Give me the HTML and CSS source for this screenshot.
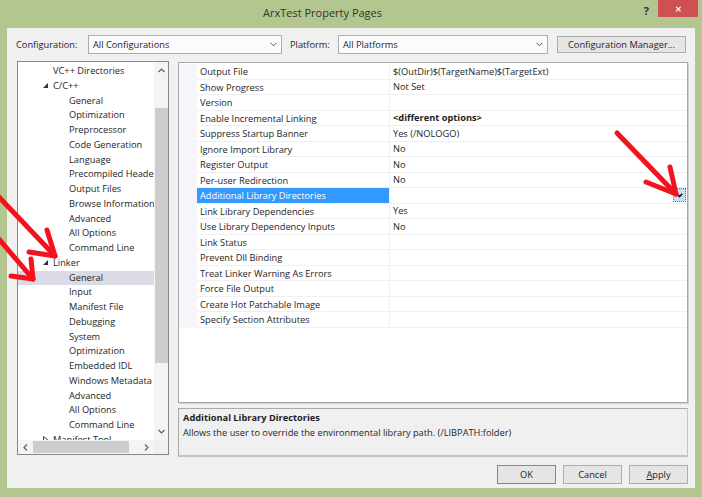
FILE: index.html
```html
<!DOCTYPE html>
<html lang="en">
  <head>
    <meta charset="UTF-8" />
    <title>ArxTest Property Pages</title>
    <link rel="stylesheet" href="styles.css">
  </head>
  <body>
    <div class="window">
      <div class="titlebar">
        <span class="title">ArxTest Property Pages</span>
        <span class="help">?</span>
        <span class="close">&#x2715;</span>
      </div>

      <div class="dialog">
        <div class="toolbar">
          <span class="label label-config">Configuration:</span>
          <div class="combo combo-config">
            <span>All Configurations</span>
            <svg class="chev" width="7" height="5" viewBox="0 0 7 5"><polyline points="0.5,0.8 3.5,3.8 6.5,0.8" fill="none" stroke="#555" stroke-width="1"/></svg>
          </div>
          <span class="label label-platform">Platform:</span>
          <div class="combo combo-platform">
            <span>All Platforms</span>
            <svg class="chev" width="7" height="5" viewBox="0 0 7 5"><polyline points="0.5,0.8 3.5,3.8 6.5,0.8" fill="none" stroke="#555" stroke-width="1"/></svg>
          </div>
          <button class="btn btn-manager">Configuration Manager...</button>
        </div>

        <div class="main">
          <!-- Left navigation tree -->
          <div class="tree">
            <div class="tree-list">
              <div class="node l1">VC++ Directories</div>
              <div class="node l1"><span class="exp open"></span>C/C++</div>
              <div class="node l2">General</div>
              <div class="node l2">Optimization</div>
              <div class="node l2">Preprocessor</div>
              <div class="node l2">Code Generation</div>
              <div class="node l2">Language</div>
              <div class="node l2">Precompiled Headers</div>
              <div class="node l2">Output Files</div>
              <div class="node l2">Browse Information</div>
              <div class="node l2">Advanced</div>
              <div class="node l2">All Options</div>
              <div class="node l2">Command Line</div>
              <div class="node l1"><span class="exp open"></span>Linker</div>
              <div class="node l2 selected">General</div>
              <div class="node l2">Input</div>
              <div class="node l2">Manifest File</div>
              <div class="node l2">Debugging</div>
              <div class="node l2">System</div>
              <div class="node l2">Optimization</div>
              <div class="node l2">Embedded IDL</div>
              <div class="node l2">Windows Metadata</div>
              <div class="node l2">Advanced</div>
              <div class="node l2">All Options</div>
              <div class="node l2">Command Line</div>
              <div class="node l1"><span class="exp closed"><svg width="5" height="7" viewBox="0 0 5 7"><polygon points="0.5,0.5 4.5,3.5 0.5,6.5" fill="none" stroke="#444" stroke-width="1"/></svg></span>Manifest Tool</div>
            </div>
            <div class="vscroll">
              <div class="sb-arrow"><svg width="7" height="5" viewBox="0 0 7 5"><polyline points="0.5,4 3.5,1 6.5,4" fill="none" stroke="#606060" stroke-width="1.2"/></svg></div>
              <div class="vtrack"><div class="vthumb"></div></div>
              <div class="sb-arrow"><svg width="7" height="5" viewBox="0 0 7 5"><polyline points="0.5,1 3.5,4 6.5,1" fill="none" stroke="#606060" stroke-width="1.2"/></svg></div>
            </div>
            <div class="hscroll">
              <div class="sb-arrow h"><svg width="5" height="7" viewBox="0 0 5 7"><polyline points="4,0.5 1,3.5 4,6.5" fill="none" stroke="#606060" stroke-width="1.2"/></svg></div>
              <div class="htrack"><div class="hthumb"></div></div>
              <div class="sb-arrow h"><svg width="5" height="7" viewBox="0 0 5 7"><polyline points="1,0.5 4,3.5 1,6.5" fill="none" stroke="#606060" stroke-width="1.2"/></svg></div>
            </div>
            <div class="corner"></div>
          </div>

          <div class="side">
            <!-- Property grid -->
            <div class="grid">
              <div class="prow"><div class="gutter"></div><div class="pname">Output File</div><div class="pval">$(OutDir)$(TargetName)$(TargetExt)</div></div>
              <div class="prow"><div class="gutter"></div><div class="pname">Show Progress</div><div class="pval">Not Set</div></div>
              <div class="prow"><div class="gutter"></div><div class="pname">Version</div><div class="pval"></div></div>
              <div class="prow"><div class="gutter"></div><div class="pname">Enable Incremental Linking</div><div class="pval bold">&lt;different options&gt;</div></div>
              <div class="prow"><div class="gutter"></div><div class="pname">Suppress Startup Banner</div><div class="pval">Yes (/NOLOGO)</div></div>
              <div class="prow"><div class="gutter"></div><div class="pname">Ignore Import Library</div><div class="pval">No</div></div>
              <div class="prow"><div class="gutter"></div><div class="pname">Register Output</div><div class="pval">No</div></div>
              <div class="prow"><div class="gutter"></div><div class="pname">Per-user Redirection</div><div class="pval">No</div></div>
              <div class="prow selected"><div class="gutter"></div><div class="pname">Additional Library Directories</div>
                <div class="pval">
                  <span class="dropbtn"><svg width="7" height="5" viewBox="0 0 7 5"><polyline points="0.8,0.8 3.5,3.6 6.2,0.8" fill="none" stroke="#111" stroke-width="1.5"/></svg></span>
                </div>
              </div>
              <div class="prow"><div class="gutter"></div><div class="pname">Link Library Dependencies</div><div class="pval">Yes</div></div>
              <div class="prow"><div class="gutter"></div><div class="pname">Use Library Dependency Inputs</div><div class="pval">No</div></div>
              <div class="prow"><div class="gutter"></div><div class="pname">Link Status</div><div class="pval"></div></div>
              <div class="prow"><div class="gutter"></div><div class="pname">Prevent Dll Binding</div><div class="pval"></div></div>
              <div class="prow"><div class="gutter"></div><div class="pname">Treat Linker Warning As Errors</div><div class="pval"></div></div>
              <div class="prow"><div class="gutter"></div><div class="pname">Force File Output</div><div class="pval"></div></div>
              <div class="prow"><div class="gutter"></div><div class="pname">Create Hot Patchable Image</div><div class="pval"></div></div>
              <div class="prow"><div class="gutter"></div><div class="pname">Specify Section Attributes</div><div class="pval"></div></div>
            </div>

            <!-- Description of the selected property -->
            <div class="desc">
              <div class="desc-title">Additional Library Directories</div>
              <div class="desc-text">Allows the user to override the environmental library path. (/LIBPATH:folder)</div>
            </div>
          </div>
        </div>

        <div class="buttons">
          <button class="btn btn-ok">OK</button>
          <button class="btn">Cancel</button>
          <button class="btn"><u>A</u>pply</button>
        </div>
      </div>

      <!-- red annotation arrows drawn over the screenshot -->
      <svg class="marks" width="702" height="497" viewBox="0 0 702 497">
        <g fill="none" stroke="#f5121c" stroke-width="5" stroke-linecap="round" stroke-linejoin="round">
          <path d="M-2,196 L55,256" />
          <path d="M47,230 L55,256 L29,252" />
          <path d="M-2,238 L33,279" />
          <path d="M31,259 L33,279 L11,276" />
          <path d="M617,133 L676,194" />
          <path d="M670,167 L676,194 L646,182" />
        </g>
      </svg>
    </div>
  </body>
</html>
```

FILE: styles.css
```css
/* Global */
* {
  box-sizing: border-box;
}

body {
  margin: 0;
  font-family: "Open Sans", "Noto Sans", sans-serif;
  font-size: 9.25px;
  color: #1e1e1e;
  background: #fff;
}

/* Window frame */
.window {
  position: relative;
  width: 702px;
  height: 497px;
  background: #b3c68f;
  padding: 0 7px 9px 7px;
  display: flex;
  flex-direction: column;
}

.titlebar {
  height: 28px;
  display: flex;
  align-items: flex-start;
}

.title {
  font-size: 11px;
  color: #333;
  margin: 5px 0 0 256px;
}

.help {
  margin: 3px 0 0 auto;
  font-size: 11px;
  font-weight: bold;
  color: #333;
}

.close {
  width: 40px;
  height: 17px;
  margin: 0 -3px 0 9px;
  background: #cf5050;
  color: #fff;
  font-size: 8px;
  font-weight: bold;
  display: flex;
  align-items: center;
  justify-content: center;
}

/* Dialog body */
.dialog {
  flex: 1;
  background: #f0f0f0;
  padding: 7px 7px 4px 9px;
  display: flex;
  flex-direction: column;
}

.toolbar {
  display: flex;
  align-items: center;
  height: 19px;
}

.label-config {
  width: 72px;
}

.label-platform {
  width: 48px;
  margin-left: 8px;
}

.combo {
  height: 19px;
  border: 1px solid #abadb3;
  background: #fbfbfb;
  display: flex;
  align-items: center;
  justify-content: space-between;
  padding: 0 4px 0 4px;
}

.combo-config {
  width: 194px;
}

.combo-platform {
  width: 210px;
}

.btn {
  font-family: inherit;
  font-size: 9.25px;
  color: #1e1e1e;
  background: #e5e5e5;
  border: 1px solid #adadad;
  padding: 0;
  width: 59px;
  height: 19px;
}

.btn-manager {
  width: 129px;
  height: 17px;
  margin-left: 9px;
}

.btn-ok {
  border-color: #3399ff;
}

.main {
  display: flex;
  margin-top: 7px;
  height: 396px;
}

/* Tree */
.tree {
  width: 152px;
  height: 394px;
  margin-left: 1px;
  border: 1px solid #828790;
  background: #fff;
  display: grid;
  grid-template-columns: 136px 14px;
  grid-template-rows: 378px 14px;
}

.tree-list {
  overflow: hidden;
  padding-top: 2px;
}

.node {
  height: 14.75px;
  line-height: 14.75px;
  white-space: nowrap;
  overflow: hidden;
}

.node.l1 {
  padding-left: 35px;
}

.node.l2 {
  padding-left: 51px;
}

.node.selected {
  background: #dadbe6;
}

.exp {
  display: inline-block;
  width: 10px;
  margin-left: -10px;
  vertical-align: middle;
}

.exp.open::before {
  content: "";
  display: block;
  width: 0;
  height: 0;
  border-left: 5px solid transparent;
  border-bottom: 5px solid #333;
  margin-bottom: 2px;
}

.exp.closed svg {
  display: block;
  margin-bottom: 2px;
}

.vscroll {
  background: #f4f4f4;
  display: flex;
  flex-direction: column;
}

.sb-arrow {
  height: 17px;
  display: flex;
  align-items: center;
  justify-content: center;
}

.sb-arrow.h {
  height: auto;
  width: 15px;
}

.vtrack {
  flex: 1;
  padding-top: 29px;
}

.vthumb {
  width: 13px;
  margin-left: 1px;
  height: 255px;
  background: #cdcdcd;
}

.hscroll {
  background: #f4f4f4;
  display: flex;
}

.htrack {
  flex: 1;
  display: flex;
  align-items: center;
}

.hthumb {
  width: 96px;
  height: 12px;
  background: #cdcdcd;
}

.corner {
  background: #f0f0f0;
}

/* Property grid */
.side {
  width: 510px;
  margin-left: 9px;
  display: flex;
  flex-direction: column;
}

.grid {
  height: 342px;
  margin-top: 1px;
  border: 1px solid #a9a9a9;
  box-shadow: 1px 1px 0 #d0d0d0;
  background: #fff;
  padding-top: 1px;
}

.prow {
  display: flex;
  height: 15.5px;
  line-height: 15px;
}

.gutter {
  width: 18px;
  background: #f5f5fa;
}

.pname {
  width: 193px;
  padding-left: 3px;
  border-bottom: 1px solid #f0f0f3;
  border-right: 1px solid #f0f0f3;
  white-space: nowrap;
  overflow: hidden;
}

.pval {
  flex: 1;
  padding-left: 3px;
  border-bottom: 1px solid #f0f0f3;
  white-space: nowrap;
  display: flex;
  align-items: center;
}

.pval.bold {
  font-weight: bold;
}

.prow.selected .pname {
  background: #3399ff;
  color: #fff;
}

.prow.selected .pval {
  justify-content: flex-end;
  padding-right: 1px;
}

.dropbtn {
  width: 13px;
  height: 14px;
  background: #c9e0f7;
  border: 1px dotted #3c7fb1;
  display: flex;
  align-items: center;
  justify-content: center;
}

/* Description box */
.desc {
  height: 49px;
  margin-top: 5px;
  border: 1px solid #a9a9a9;
  border-right-color: #c4c4c4;
  border-bottom: 2px solid #c4c4c4;
  padding: 1px 4px;
  line-height: 15px;
}

.desc-title {
  font-weight: bold;
}

/* Bottom buttons */
.buttons {
  display: flex;
  justify-content: flex-end;
  gap: 7px;
  margin-top: 8px;
}

/* Annotation overlay */
.marks {
  position: absolute;
  left: 0;
  top: 0;
  pointer-events: none;
}
```
